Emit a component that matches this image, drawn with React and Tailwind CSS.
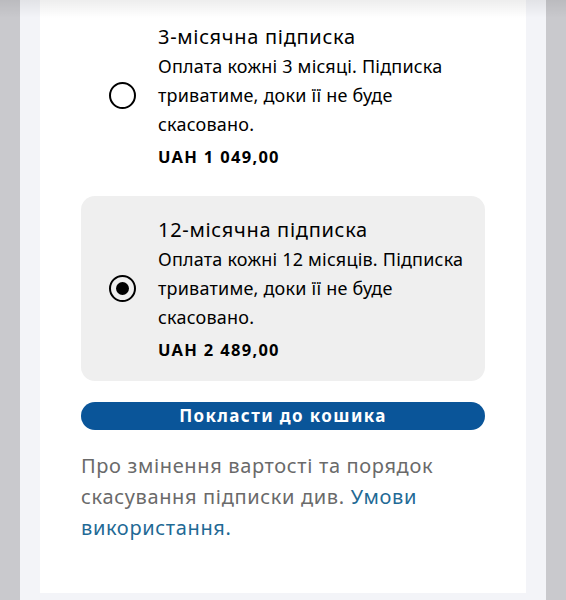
export default function App() {
  const font = { fontFamily: '"Noto Sans", "Open Sans", sans-serif' };
  const Radio = ({ checked }) => (
    <div className="w-[27px] h-[27px] shrink-0 rounded-full border-[2.5px] border-black flex items-center justify-center">
      {checked && <div className="w-[13px] h-[13px] rounded-full bg-black" />}
    </div>
  );
  const Option = ({ checked, title, desc, price }) => (
    <div className={`flex items-center rounded-[14px] pl-[28px] pr-[12px] pt-[20px] pb-[20px] ${checked ? "bg-[#efefef]" : "bg-white"}`}>
      <Radio checked={checked} />
      <div className="ml-[22px] flex-1 flex flex-col text-black">
        <div className="text-[20px] leading-[28px] tracking-[0.7px]">{title}</div>
        <div className="mt-[1px] text-[18px] leading-[29px] tracking-[0.2px]">{desc}</div>
        <div className="mt-[7px] text-[16.5px] leading-[22px] font-bold tracking-[1.3px]">{price}</div>
      </div>
    </div>
  );
  return (
    <div style={font} className="relative w-[566px] h-[600px] overflow-hidden bg-[#c9c9cd] flex">
      <div className="w-[20px] shrink-0" />
      <div className="flex-1 bg-[#f3f4f8] px-[20px] flex">
        <div className="flex-1 bg-white h-[593px] px-[41px] pt-[3px] flex flex-col">
          <Option
            title="3-місячна підписка"
            desc="Оплата кожні 3 місяці. Підписка триватиме, доки її не буде скасовано."
            price="UAH 1 049,00"
          />
          <div className="h-[8px]" />
          <Option
            checked
            title="12-місячна підписка"
            desc="Оплата кожні 12 місяців. Підписка триватиме, доки її не буде скасовано."
            price="UAH 2 489,00"
          />
          <button className="mt-[21px] h-[28px] shrink-0 rounded-full bg-[#0a5599] text-white font-bold text-[17px] leading-[28px] tracking-[1.4px]">
            Покласти до кошика
          </button>
          <p className="mt-[20px] text-[20px] leading-[31px] tracking-[0.65px] text-[#6a6a6a]">
            Про змінення вартості та порядок скасування підписки див.{" "}
            <span className="text-[#1f6a95]">Умови використання.</span>
          </p>
        </div>
      </div>
      <div className="w-[20px] shrink-0" />
      <div className="absolute left-0 right-0 top-0 h-[18px] bg-gradient-to-b from-[rgba(0,0,0,0.07)] to-transparent pointer-events-none" />
    </div>
  );
}
